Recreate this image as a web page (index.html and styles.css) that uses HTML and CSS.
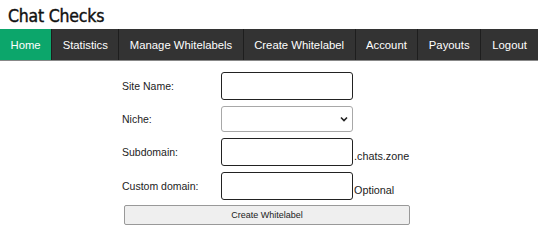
FILE: index.html
```html
<!DOCTYPE html>
<html lang="en">
<head>
    <meta charset="UTF-8">
    <meta name="viewport" content="width=device-width, initial-scale=1.0">
    <title>Chat Checks</title>
    <link rel="stylesheet" href="styles.css">
</head>
<body>

    <header>
        <h1 class="site-name">Chat Checks</h1>
    </header>

    <nav class="topnav">
        <a href="#" class="active">Home</a>
        <a href="#">Statistics</a>
        <a href="#">Manage Whitelabels</a>
        <a href="#">Create Whitelabel</a>
        <a href="#">Account</a>
        <a href="#">Payouts</a>
        <a href="#">Logout</a>
    </nav>

    <form class="wl-form">
        <label for="site-name">Site Name:</label>
        <div class="field"><input type="text" id="site-name"></div>

        <label for="niche">Niche:</label>
        <div class="field">
            <div class="select-wrap">
                <select id="niche"><option></option></select>
                <svg class="chevron" width="8" height="6" viewBox="0 0 8 6"><path d="M1 1.5 L4 4.5 L7 1.5" fill="none" stroke="#222" stroke-width="1.6"/></svg>
            </div>
        </div>

        <label for="subdomain">Subdomain:</label>
        <div class="field"><input type="text" id="subdomain"><span class="suffix">.chats.zone</span></div>

        <label for="custom-domain">Custom domain:</label>
        <div class="field"><input type="text" id="custom-domain"><span class="suffix">Optional</span></div>

        <button type="button" class="submit-btn">Create Whitelabel</button>
    </form>

</body>
</html>
```

FILE: styles.css
```css
*
{
    padding: 0;
    margin: 0;
    box-sizing: border-box;
}

body
{
    font-family: Arial, "Liberation Sans", sans-serif;
    color: #222;
    background: #fff;
}

header
{
    height: 29px;
    padding: 5px 0 0 8px;
}

.site-name
{
    font-family: "DejaVu Sans Condensed", sans-serif;
    font-size: 17.5px;
    font-weight: normal;
    line-height: 22px;
    color: #111;
    letter-spacing: -0.2px;
    -webkit-text-stroke: 0.4px #111;
}

.topnav
{
    display: flex;
    height: 32px;
    background-color: #333;
    border-bottom: 1px solid #888;
}

.topnav a
{
    display: flex;
    align-items: center;
    flex-shrink: 0;
    white-space: nowrap;
    padding: 0 10.5px;
    color: #fff;
    font-size: 11.3px;
    text-decoration: none;
    border-right: 1px solid #1e1e1e;
}

.topnav a:last-child { border-right: none; flex: 1; justify-content: center; }

.topnav a.active
{
    background-color: #0ca66b;
}

.wl-form
{
    width: 298px;
    margin: 11px auto 0;
    display: grid;
    grid-template-columns: 101px 1fr;
    row-gap: 6px;
    align-items: center;
    font-size: 10.5px;
}

.wl-form label
{
    padding-left: 2px;
    color: #222;
}

.field
{
    display: flex;
    align-items: flex-end;
}

.field input
{
    width: 132px;
    height: 28px;
    border: 1.5px solid #222;
    border-radius: 3px;
    background: #fff;
}

.select-wrap
{
    position: relative;
    width: 132px;
    height: 26px;
}

.select-wrap select
{
    appearance: none;
    width: 100%;
    height: 100%;
    border: 1px solid #a8a8a8;
    border-radius: 3px;
    background: #fff;
}

.chevron
{
    position: absolute;
    right: 5px;
    top: 10px;
    pointer-events: none;
}

.suffix
{
    font-size: 10.8px;
    color: #222;
    padding: 0 0 4px 1px;
    line-height: 12px;
}

.submit-btn
{
    grid-column: 1 / 3;
    margin: -1px 0 0 4px;
    height: 20px;
    width: 286px;
    background: #efefef;
    border: 1px solid #999;
    border-radius: 2px;
    font-family: Arial, "Liberation Sans", sans-serif;
    font-size: 9px;
    color: #222;
}
```
